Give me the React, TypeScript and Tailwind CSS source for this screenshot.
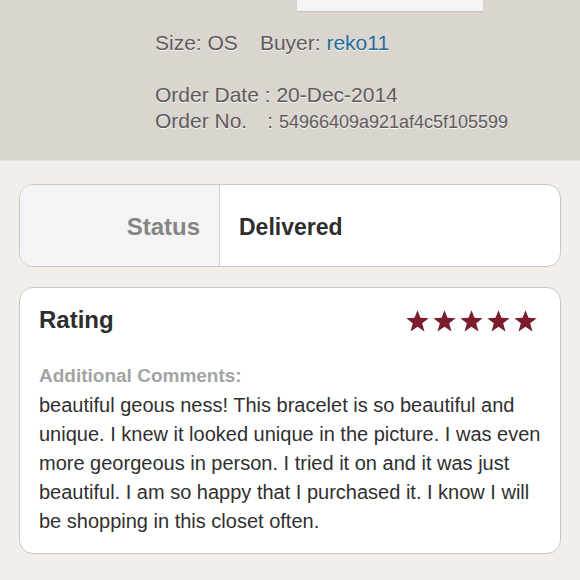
import React from "react";

const comment = [
  "beautiful geous ness! This bracelet is so beautiful and",
  "unique. I knew it looked unique in the picture. I was even",
  "more georgeous in person. I tried it on and it was just",
  "beautiful. I am so happy that I purchased it. I know I will",
  "be shopping in this closet often.",
];

function Star() {
  return (
    <svg width="23" height="22" viewBox="0 0 24 23">
      <polygon
        points="12,0.3 15.1,8.2 23.7,8.5 16.9,13.9 19.3,22.5 12,17.5 4.7,22.5 7.1,13.9 0.3,8.5 8.9,8.2"
        fill="#7b1d2b"
      />
    </svg>
  );
}

function OrderInfo() {
  return (
    <section className="h-[161px] bg-[#dbd5d0] border-b border-[#e6e1dc]">
      <div className="ml-[297px] w-[186px] h-[11px] bg-[#f4f4f5] shadow-[0_1px_1px_rgba(0,0,0,0.08)]"></div>
      <div className="pl-[155px] pt-[19px] text-[21px] text-[#5c5c5c] [text-shadow:0_1px_0_rgba(255,255,255,0.75)]">
        <p className="leading-[26px] whitespace-nowrap">
          Size: OS<span className="ml-[22px]">Buyer: </span>
          <span className="text-[#1f6d9b]">reko11</span>
        </p>
        <p className="mt-[26px] leading-[26px] whitespace-nowrap">
          Order Date : 20-Dec-2014
        </p>
        <p className="leading-[26px] whitespace-nowrap">
          Order No.<span className="ml-[20px]">: </span>
          <span className="text-[18px]">54966409a921af4c5f105599</span>
        </p>
      </div>
    </section>
  );
}

function StatusCard() {
  return (
    <div className="mx-[19px] mt-[23px] h-[83px] flex rounded-[14px] border-[1.5px] border-[#c8c8c8] bg-white overflow-hidden">
      <div className="w-[200px] bg-[#f4f4f4] border-r-[1.5px] border-[#cfcfcf] flex items-center justify-end pr-[19px] pt-[3px]">
        <span className="text-[24px] font-bold text-[#858585]">Status</span>
      </div>
      <div className="flex items-center pl-[19px] pt-[3px]">
        <span className="text-[23px] font-bold text-[#2e2e2e]">Delivered</span>
      </div>
    </div>
  );
}

function RatingCard() {
  return (
    <div className="mx-[19px] mt-[20px] rounded-[14px] border-[1.5px] border-[#c8c8c8] bg-white px-[19px] pt-[17px] pb-[17px]">
      <div className="flex flex-row items-center justify-between">
        <p className="text-[24px] leading-[30px] font-bold text-[#2e2e2e]">Rating</p>
        <div className="flex flex-row gap-[4px] mr-[4px] mt-[1px]">
          <Star />
          <Star />
          <Star />
          <Star />
          <Star />
        </div>
      </div>
      <p className="mt-[29px] text-[19px] leading-[24px] font-bold text-[#a3a3a3]">
        Additional Comments:
      </p>
      <div className="mt-[3px] text-[20px] leading-[29px] text-[#2f2f2f]">
        {comment.map((line) => {
          return (
            <span key={line} className="block whitespace-nowrap">
              {line}
            </span>
          );
        })}
      </div>
    </div>
  );
}

function App() {
  return (
    <div className="w-[580px] h-[580px] overflow-hidden bg-[#f2efea] font-['Liberation_Sans',Arial,sans-serif]">
      <OrderInfo />
      <StatusCard />
      <RatingCard />
    </div>
  );
}

export default App;
